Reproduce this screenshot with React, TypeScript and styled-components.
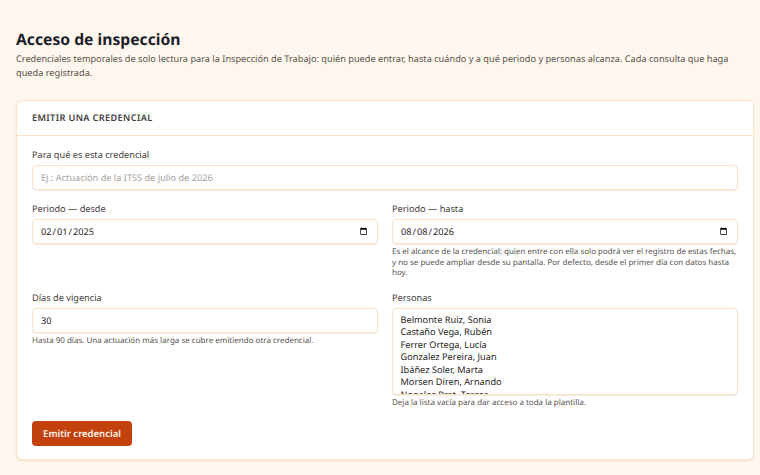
import React from "react";
import styled, { createGlobalStyle } from "styled-components";

const people = [
  "Belmonte Ruiz, Sonia",
  "Castaño Vega, Rubén",
  "Ferrer Ortega, Lucía",
  "Gonzalez Pereira, Juan",
  "Ibáñez Soler, Marta",
  "Morsen Diren, Arnando",
  "Nogales Prat, Teresa",
  "Ortiz Campos, Diego",
];

const App = () => {
  return (
    <>
      <GlobalStyle />
      <Page>
        <Title>Acceso de inspección</Title>
        <Intro>
          Credenciales temporales de solo lectura para la Inspección de Trabajo:
          quién puede entrar, hasta cuándo y a qué periodo y personas alcanza.
          Cada consulta que haga queda registrada.
        </Intro>
        <Card>
          <CardHeader>Emitir una credencial</CardHeader>
          <CardBody>
            <Field>
              <Label htmlFor="motivo">Para qué es esta credencial</Label>
              <Input
                id="motivo"
                type="text"
                placeholder="Ej.: Actuación de la ITSS de julio de 2026"
              />
            </Field>
            <TwoColumns>
              <Field>
                <Label htmlFor="desde">Periodo — desde</Label>
                <Input id="desde" type="date" defaultValue="2025-02-01" />
              </Field>
              <Field>
                <Label htmlFor="hasta">Periodo — hasta</Label>
                <Input id="hasta" type="date" defaultValue="2026-08-08" />
                <Help>
                  Es el alcance de la credencial: quien entre con ella solo podrá
                  ver el registro de estas fechas, y no se puede ampliar desde su
                  pantalla. Por defecto, desde el primer día con datos hasta hoy.
                </Help>
              </Field>
            </TwoColumns>
            <TwoColumns>
              <Field>
                <Label htmlFor="dias">Días de vigencia</Label>
                <Input id="dias" type="number" defaultValue={30} />
                <Help>
                  Hasta 90 días. Una actuación más larga se cubre emitiendo otra
                  credencial.
                </Help>
              </Field>
              <Field>
                <Label htmlFor="personas">Personas</Label>
                <People id="personas" multiple>
                  {people.map((person) => (
                    <Person key={person}>{person}</Person>
                  ))}
                </People>
                <Help>Deja la lista vacía para dar acceso a toda la plantilla.</Help>
              </Field>
            </TwoColumns>
            <Actions>
              <Submit type="button">Emitir credencial</Submit>
            </Actions>
          </CardBody>
        </Card>
      </Page>
    </>
  );
};
export default App;

const GlobalStyle = createGlobalStyle`
  * {
    box-sizing: border-box;
  }
  html, body {
    margin: 0;
    background-color: #fff7ed;
    overflow: hidden;
  }
  body {
    font-family: "Noto Sans", sans-serif;
    color: #1c1917;
    text-rendering: geometricPrecision;
  }
  input, select, button {
    text-rendering: geometricPrecision;
  }
`;

const Page = styled.main`
  height: 475px;
  padding: 29px 6px 0 16px;
`;

const Title = styled.h1`
  margin: 0;
  font-size: 15.7px;
  line-height: 21px;
  font-weight: 700;
  color: #1c1f2b;
`;

const Intro = styled.p`
  margin: 2px 0 0;
  font-size: 9.2px;
  line-height: 13.5px;
  color: #57534e;
`;

const Card = styled.section`
  margin-top: 21px;
  background-color: #fff;
  border: 1px solid #fde3c4;
  border-radius: 6px;
  box-shadow: 0 1px 2px rgba(120, 80, 30, 0.12);
`;

const CardHeader = styled.h2`
  margin: 0;
  padding: 0 15px 1px;
  height: 35px;
  display: flex;
  align-items: center;
  border-bottom: 1px solid #fde3c4;
  font-size: 9.2px;
  font-weight: 600;
  letter-spacing: 0.35px;
  text-transform: uppercase;
  color: #44403c;
`;

const CardBody = styled.div`
  padding: 13px 15px 13px;
  display: flex;
  flex-direction: column;
  gap: 13px;
`;

const TwoColumns = styled.div`
  display: grid;
  grid-template-columns: 1fr 1fr;
  gap: 14px;
`;

const Field = styled.div`
  display: flex;
  flex-direction: column;
  min-width: 0;
`;

const Label = styled.label`
  font-size: 9.2px;
  line-height: 12px;
  margin-bottom: 4px;
  color: #44403c;
`;

const Input = styled.input`
  width: 100%;
  height: 25px;
  padding: 0 8px;
  background-color: #fff;
  border: 1px solid #fde3c4;
  border-radius: 4px;
  box-shadow: 0 1px 1px rgba(120, 80, 30, 0.1);
  font-family: inherit;
  font-size: 9.2px;
  color: #292524;
  outline: none;

  &::placeholder {
    color: #a8a29e;
  }
  &::-webkit-datetime-edit {
    margin-left: -1px;
  }
  &::-webkit-calendar-picker-indicator {
    width: 9px;
    height: 9px;
    margin: 0;
    padding: 0;
    margin-right: 1px;
  }
`;

const People = styled.select`
  width: 100%;
  height: 87px;
  padding: 4px 5.5px;
  background-color: #fff;
  border: 1px solid #fde3c4;
  border-radius: 4px;
  box-shadow: 0 1px 1px rgba(120, 80, 30, 0.1);
  font-family: inherit;
  font-size: 9.2px;
  color: #292524;
  outline: none;
  overflow: hidden;
`;

const Person = styled.option`
  min-height: 0;
  height: 12.5px;
  line-height: 12.5px;
  padding: 0 2px;
`;

const Help = styled.p`
  margin: 3px 0 0;
  font-size: 8px;
  line-height: 10.5px;
  color: #57534e;
`;

const Actions = styled.div`
  display: flex;
`;

const Submit = styled.button`
  width: 100px;
  height: 25px;
  padding: 0;
  background-color: #c2410c;
  border: none;
  border-radius: 4px;
  font-family: inherit;
  font-size: 9.5px;
  font-weight: 600;
  color: #fff7ed;
`;
